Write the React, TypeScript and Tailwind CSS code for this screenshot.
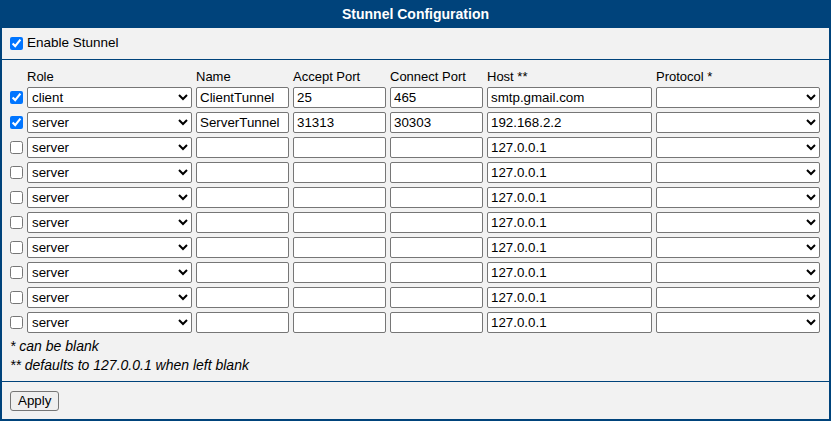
import React from 'react';

interface TunnelRow {
  enabled: boolean;
  role: string;
  name: string;
  accept: string;
  connect: string;
  host: string;
  autofill?: boolean;
}

const ROWS: TunnelRow[] = [
  { enabled: true, role: 'client', name: 'ClientTunnel', accept: '25', connect: '465', host: 'smtp.gmail.com', autofill: true },
  { enabled: true, role: 'server', name: 'ServerTunnel', accept: '31313', connect: '30303', host: '192.168.2.2' },
  ...Array.from({ length: 8 }, () => ({
    enabled: false,
    role: 'server',
    name: '',
    accept: '',
    connect: '',
    host: '127.0.0.1',
  })),
];

const field =
  "h-[21px] border border-[#767676] rounded-[2px] bg-white px-[3px] text-[13.33px] text-black font-['Liberation_Sans',Arial,sans-serif] outline-none";
const dropdown =
  "h-[21px] border border-[#767676] rounded-[2px] bg-white text-[13.33px] text-black font-['Liberation_Sans',Arial,sans-serif] outline-none";

export default function App() {
  return (
    <div className="w-[831px] h-[421px] flex flex-col bg-[#f2f2f2] border-2 border-t-0 border-[#00437b] font-['Liberation_Sans',Arial,sans-serif] text-[13px] text-black">
      <div className="h-[28px] shrink-0 -mx-[2px] bg-[#00437b] flex items-center justify-center text-white font-bold text-[14px]">
        Stunnel Configuration
      </div>

      <div className="h-[32px] shrink-0 flex items-center pl-[8px] gap-[4px] border-b border-[#00437b]">
        <input type="checkbox" defaultChecked className="w-[13px] h-[13px] m-0" />
        <span className="text-[13.5px]">Enable Stunnel</span>
      </div>

      <div className="h-[322px] shrink-0 flex flex-col pt-[9px] pl-[8px] border-b border-[#00437b]">
        <div className="flex gap-[4px] h-[15px] leading-[15px]">
          <div className="w-[13px]" />
          <div className="w-[165px]">Role</div>
          <div className="w-[93px]">Name</div>
          <div className="w-[93px]">Accept Port</div>
          <div className="w-[93px]">Connect Port</div>
          <div className="w-[165px]">Host **</div>
          <div className="w-[164px]">Protocol *</div>
        </div>

        <div className="flex flex-col gap-[4px] mt-[3px]">
          {ROWS.map((r, i) => (
            <div key={i} className="flex items-center gap-[4px] h-[21px]">
              <input type="checkbox" defaultChecked={r.enabled} className="w-[13px] h-[13px] m-0" />
              <select defaultValue={r.role} className={`${dropdown} w-[165px]`}>
                <option value="client">client</option>
                <option value="server">server</option>
              </select>
              <input type="text" defaultValue={r.name} className={`${field} w-[93px]`} />
              <input type="text" defaultValue={r.accept} className={`${field} w-[93px]`} />
              <input type="text" defaultValue={r.connect} className={`${field} w-[93px]`} />
              <input
                type="text"
                defaultValue={r.host}
                className={`${field} w-[165px] ${r.autofill ? 'bg-[#e8f0fe]' : ''}`}
              />
              <select defaultValue="" className={`${dropdown} w-[164px]`}>
                <option value=""></option>
              </select>
            </div>
          ))}
        </div>

        <div className="mt-[4px] italic leading-[19px] text-[14px]">
          <div>* can be blank</div>
          <div>** defaults to 127.0.0.1 when left blank</div>
        </div>
      </div>

      <div className="flex-1 flex items-center pl-[8px]">
        <button className="h-[20px] px-[7px] bg-[#efefef] border border-[#767676] rounded-[3px] text-[13.33px] leading-none">
          Apply
        </button>
      </div>
    </div>
  );
}
